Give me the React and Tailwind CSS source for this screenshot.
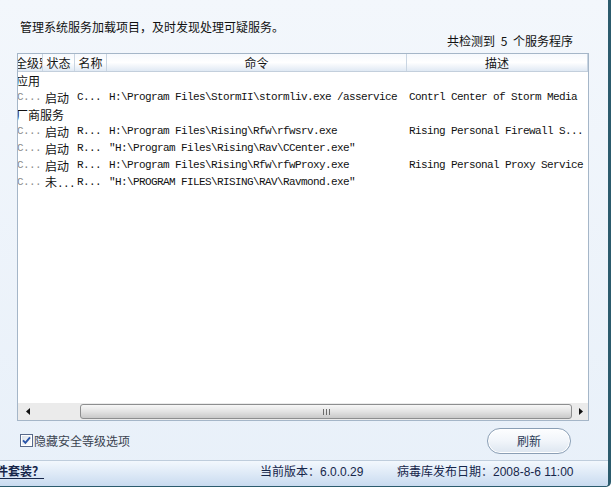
import React from "react";

const mono = "font-['Liberation_Mono',monospace] text-[11px] tracking-[-0.6px]";

const rows = [
    { group: "应用" },
    { lvl: "C...", state: "启动", name: "C...", cmd: "H:\\Program Files\\StormII\\stormliv.exe /asservice", desc: "Contrl Center of Storm Media" },
    { group: "厂商服务" },
    { lvl: "C...", state: "启动", name: "R...", cmd: "H:\\Program Files\\Rising\\Rfw\\rfwsrv.exe", desc: "Rising Personal Firewall S..." },
    { lvl: "C...", state: "启动", name: "R...", cmd: "\"H:\\Program Files\\Rising\\Rav\\CCenter.exe\"", desc: "" },
    { lvl: "C...", state: "启动", name: "R...", cmd: "H:\\Program Files\\Rising\\Rfw\\rfwProxy.exe", desc: "Rising Personal Proxy Service" },
    { lvl: "C...", state: "未", name: "R...", cmd: "\"H:\\PROGRAM FILES\\RISING\\RAV\\Ravmond.exe\"", desc: "", cut: true },
];

function HeaderRow() {
    return (
        <div className="flex h-[18px] border-b border-[#c3cfdc] bg-gradient-to-b from-[#f6f9fd] via-white to-[#e0e9f4] leading-[17px] text-[#151515]">
            <div className="w-[41px] overflow-hidden whitespace-nowrap border-r border-[#c9d5e2] pl-[1px]">安全级别</div>
            <div className="w-[32px] border-r border-[#c9d5e2] text-center">状态</div>
            <div className="w-[32px] border-r border-[#c9d5e2] text-center">名称</div>
            <div className="w-[300px] border-r border-[#c9d5e2] text-center">命令</div>
            <div className="w-[181px] border-r border-[#c9d5e2] text-center">描述</div>
        </div>
    );
}

function Row({ row }) {
    if (row.group) {
        return <div className="h-[17px] pl-[14px] leading-[17px] text-[#111]">{row.group}</div>;
    }
    return (
        <div className="flex h-[17px] items-center whitespace-pre leading-[17px] text-[#111]">
            <div className={`w-[41px] pl-[15px] text-[#8c8c8c] ${mono}`}>{row.lvl}</div>
            <div className="w-[32px] overflow-hidden pl-[2px]">
                {row.state}
                {row.cut && <span className={mono}>...</span>}
            </div>
            <div className={`w-[32px] pl-[2px] ${mono}`}>{row.name}</div>
            <div className={`w-[300px] overflow-hidden pl-[2px] ${mono}`}>{row.cmd}</div>
            <div className={`w-[181px] overflow-hidden pl-[2px] ${mono}`}>{row.desc}</div>
        </div>
    );
}

function ScrollBar() {
    return (
        <div className="flex h-[17px] bg-[#ebebeb]">
            <div className="flex w-[17px] items-center justify-center pl-[2px]">
                <svg width="4" height="7" viewBox="0 0 4 7"><path d="M4 0 L0 3.5 L4 7 Z" fill="#111" /></svg>
            </div>
            <div className="flex flex-1 items-center pl-[45px] pr-[1px]">
                <div className="flex h-[15px] flex-1 items-center justify-center gap-[2px] rounded-[3px] border border-[#8d8e8f] bg-gradient-to-b from-[#f7f7f7] via-[#e3e3e3] to-[#c9c9c9]">
                    <span className="h-[6px] w-[1px] bg-[#6b6b6b]" />
                    <span className="h-[6px] w-[1px] bg-[#6b6b6b]" />
                    <span className="h-[6px] w-[1px] bg-[#6b6b6b]" />
                </div>
            </div>
            <div className="flex w-[15px] items-center justify-center">
                <svg width="4" height="7" viewBox="0 0 4 7"><path d="M0 0 L4 3.5 L0 7 Z" fill="#111" /></svg>
            </div>
        </div>
    );
}

function CheckBox() {
    return (
        <svg width="13" height="13" viewBox="0 0 13 13">
            <defs>
                <linearGradient id="cbfill" x1="0" y1="0" x2="1" y2="1">
                    <stop offset="0" stopColor="#d9e0e9" />
                    <stop offset="1" stopColor="#ffffff" />
                </linearGradient>
            </defs>
            <rect x="0.5" y="0.5" width="12" height="12" fill="#fff" stroke="#58698a" />
            <rect x="2" y="2" width="9" height="9" fill="url(#cbfill)" />
            <path d="M3 6.3 L5.4 8.8 L10 3.4" fill="none" stroke="#2a55a8" strokeWidth="1.9" />
        </svg>
    );
}

export default function App() {
    return (
        <div className="flex h-[487px] w-[611px] flex-col overflow-hidden rounded-br-[5px] border-b border-r-[3px] border-[#2c5b6d] bg-gradient-to-b from-[#f3f7fc] to-[#e8f0f9] font-['Noto_Sans_CJK_SC',sans-serif] text-[12px] text-[#111]">
            <div className="flex flex-1 flex-col pl-[17px] pr-[19px]">
                <div className="mt-[20px] pl-[3px] leading-[14px]">管理系统服务加载项目，及时发现处理可疑服务。</div>
                <div className="flex justify-end pr-[16px] leading-[14px]">
                    <span>共检测到</span>
                    <span className="w-[18px] text-center">5</span>
                    <span>个服务程序</span>
                </div>
                <div className="mt-[5px] flex h-[368px] flex-col border border-[#a5b6c8] bg-white">
                    <div className="flex-1 overflow-hidden">
                        <div className="-ml-[16px] w-[586px]">
                            <HeaderRow />
                            {rows.map((r, i) => <Row key={i} row={r} />)}
                        </div>
                    </div>
                    <ScrollBar />
                </div>
                <div className="flex h-[39px] items-center">
                    <div className="ml-[3px] flex items-center">
                        <CheckBox />
                        <span className="ml-[1px] leading-[14px] text-[#3b4350]">隐藏安全等级选项</span>
                    </div>
                    <button className="ml-auto mr-[18px] h-[26px] w-[84px] rounded-full border border-[#8b9fb5] bg-gradient-to-b from-[#fdfeff] via-[#f1f5fa] to-[#dde6f0] text-[12px] text-[#2b3b57] shadow-[inset_0_0_0_1px_#ffffff]">
                        刷新
                    </button>
                </div>
            </div>
            <div className="flex h-[26px] items-center border-t border-[#bfcddc] bg-gradient-to-b from-[#f3f8fd] to-[#c9dbf0] pb-[3px] font-['Liberation_Sans','Noto_Sans_CJK_SC',sans-serif] text-[12px] text-[#16264a]">
                <div className="w-[260px] overflow-hidden">
                    <span className="-ml-[4px] font-bold underline underline-offset-2">件套装？</span>
                </div>
                <div className="w-[137px] whitespace-nowrap">当前版本：6.0.0.29</div>
                <div className="whitespace-nowrap">病毒库发布日期：2008-8-6 11:00</div>
            </div>
        </div>
    );
}
